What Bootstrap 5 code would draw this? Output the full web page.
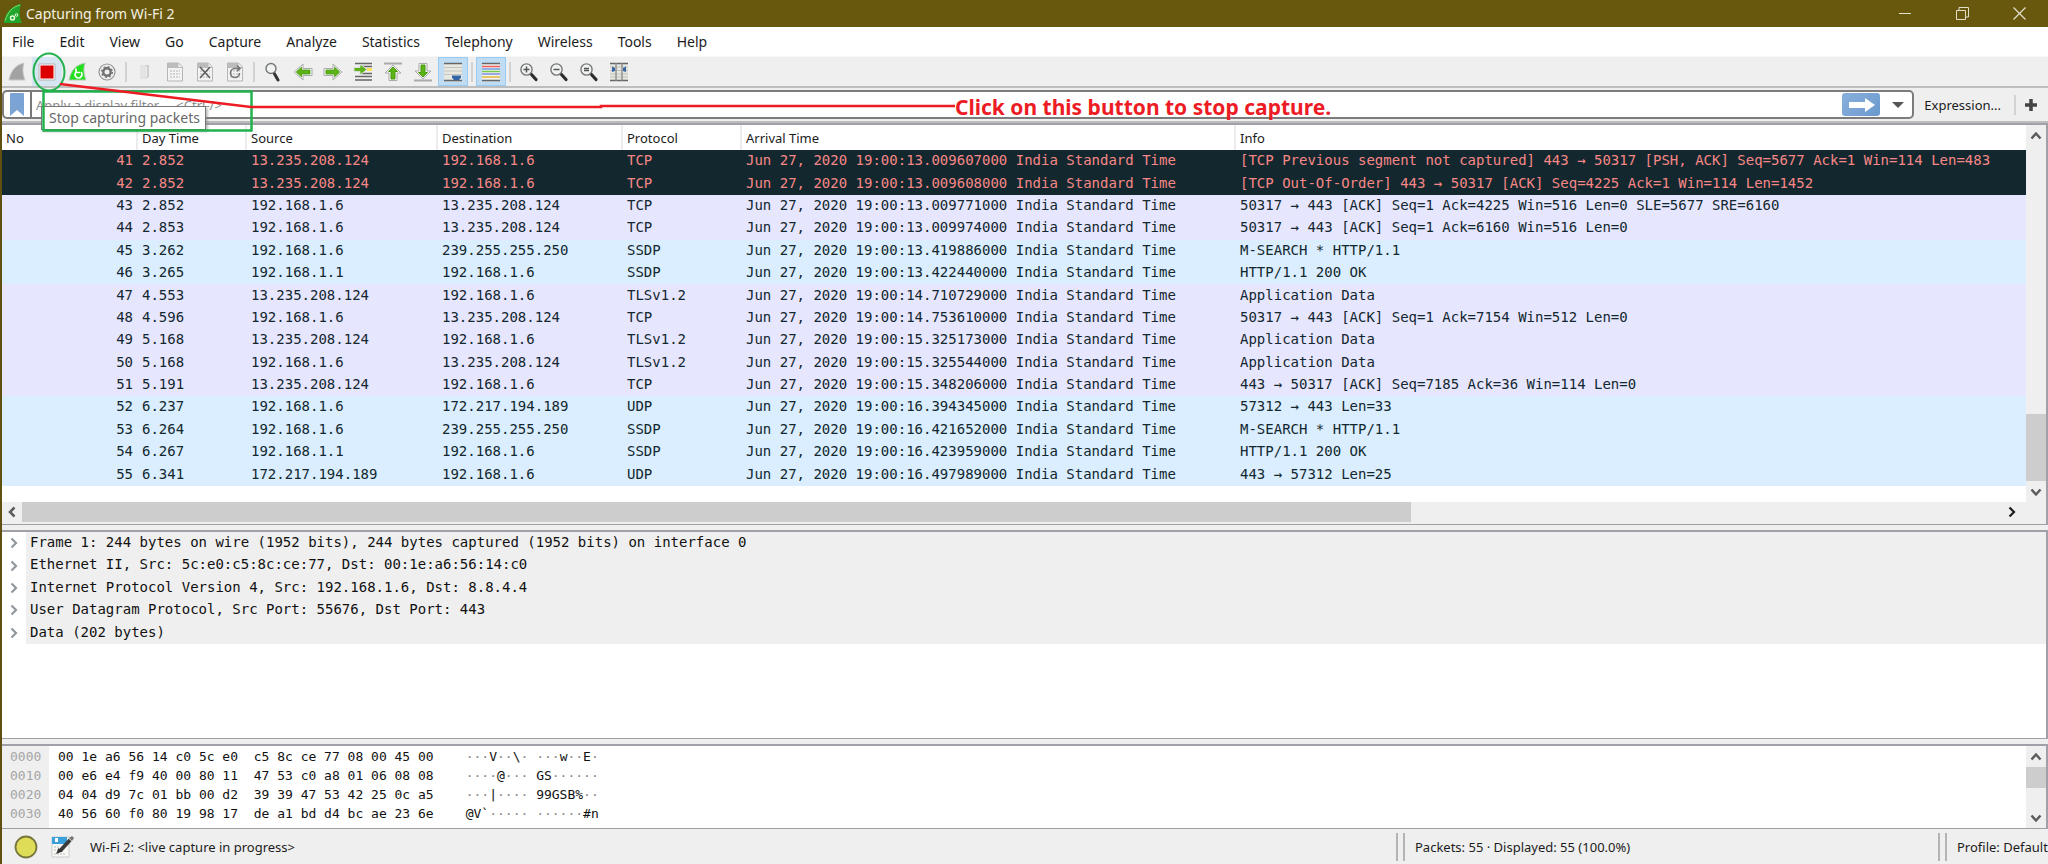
<!DOCTYPE html>
<html lang="en">
<head>
<meta charset="utf-8">
<meta name="viewport" content="width=device-width, initial-scale=1">
<title>Capturing from Wi-Fi 2</title>
<link href="https://cdn.jsdelivr.net/npm/bootstrap@5.3.0/dist/css/bootstrap.min.css" rel="stylesheet">
<style>
:root { --ui: "Noto Sans", "Open Sans", sans-serif; --code: "DejaVu Sans Mono", "Liberation Mono", monospace; --face: #efefef; --edge: #a0a0a8; }
body { font-family: var(--ui); font-size: 13px; line-height: 20px; color: #1c1c1c; background: #fff; overflow-x: hidden; }
button { border: 0; background: transparent; padding: 0; color: inherit; display: flex; align-items: center; justify-content: center; }
svg { display: block; flex: none; }
.app { border-left: 2px solid #5f5010; }
.titlebar { background: #68580d; color: #f4f1e4; height: 27px; font-size: 14px; margin-left: -2px; }
.winbtn { width: 57px; height: 27px; }
.menubar { height: 29px; font-size: 14px; gap: 25px; padding-left: 10px; }
.menubar a { color: #1c1c1c; text-decoration: none; }
.tools { background: var(--face); height: 32px; border-top: 1px solid #f7f7f7; border-bottom: 2px solid #bdbdbd; }
.tool { width: 30px; height: 29px; }
.tool.hot { background: #d5e5f2; }
.tool.on { background: #bfdcf3; border: 1px solid #99ccf5; }
.split { width: 8px; height: 20px; }
.split::before { content: ""; display: block; width: 2px; height: 20px; margin-left: 3px; background: #d2d2d2; }
.filterbar { background: var(--face); height: 35px; border-bottom: 2px solid #bdbdbd; }
.filterbox { height: 29px; background: #fff; border: 2px solid #7c7c7c; border-radius: 5px; }
.filterbox input { border: 0; outline: 0; background: transparent; font-size: 13px; color: #333; min-width: 0; }
.filterbox input::placeholder { color: #8c8c8c; opacity: 1; }
.markbtn { width: 28px; height: 25px; border-right: 2px solid #777; }
.gobtn { width: 38px; height: 23px; border-radius: 3px; background: linear-gradient(135deg, #8ab0dc, #6a99ce); }
.expr { padding: 0 10px; }
.plus { padding: 0 10px 0 5px; }
.panel { border-top: 2px solid var(--edge); border-right: 2px solid var(--edge); background: #fff; }
.packets { width: 100%; table-layout: fixed; height: 361px; border-collapse: collapse; font-family: var(--code); font-size: 14px; line-height: 20px; color: #12272e; }
.packets th { font: 13px/20px var(--ui); height: 25px; color: #1c1c1c; border-right: 2px solid #ececec; padding: 0 0 0 4px; }
.packets th:last-child { border-right: 0; }
.packets td { height: 22px; padding: 0 0 2px 5px; white-space: pre; overflow: hidden; }
.packets td:first-child { text-align: right; padding: 0 4px 2px 0; }
.bad { background: #12272e; color: #f78787; }
.tcp { background: #e7e6ff; }
.udp { background: #daeeff; }
.vbar { width: 20px; background: var(--face); }
.vbar button { width: 20px; height: 21px; }
.thumb { background: #cdcdcd; }
.hbar { height: 22px; padding-bottom: 2px; background: var(--face); }
.hbar button { width: 20px; height: 20px; }
.gapbar { height: 6px; background: var(--face); border-top: 1px solid var(--edge); }
.details { height: 208px; font-family: var(--code); font-size: 14px; line-height: 20px; color: #111; }
.tree { display: grid; grid-template-rows: repeat(5, 1fr); height: 112px; }
.tree div { display: flex; align-items: center; }
.tree button { width: 24px; height: 20px; }
.tree span { background: var(--face); align-self: stretch; flex: 1; padding-left: 4px; }
.bytes { height: 84px; font-family: var(--code); font-size: 13px; line-height: 19px; color: #111; }
.bytes pre { margin: 0; overflow: visible; font: inherit; }
.bytes i { font-style: normal; color: #888; }
.offs { background: var(--face); color: #a5a5a5; padding: 1px 7px 0 8px; width: 47px; }
.bytes .offs { padding-top: 1px; }
.hex { padding: 1px 0 0 9px; }
.asc { padding: 1px 0 0 32px; }
.status { background: var(--face); border-top: 1px solid var(--edge); height: 36px; }
.state { margin-left: 16px; }
.grip { width: 9px; height: 28px; border: solid #b4b4b4; border-width: 0 2px; }
.cell-pack { width: 533px; padding-left: 10px; }
.cell-prof { width: 101px; padding-left: 10px; }
.tip { position: absolute; left: 39px; top: 106px; width: 165px; height: 24px; border: 1px solid #777; background: #fff; color: #686868; font-size: 14px; line-height: 22px; padding-left: 7px; white-space: nowrap; box-shadow: 2px 2px 2px #8888; }
.marks { position: absolute; left: 0; top: 0; pointer-events: none; }
.callout { position: absolute; left: 955px; top: 93px; color: #ed1c24; font-size: 21px; line-height: 28px; font-weight: 700; white-space: nowrap; }
</style>
</head>
<body>
<svg width="0" height="0" class="position-absolute" aria-hidden="true">
<defs>
<symbol id="up" viewBox="0 0 12 12"><path d="M1.500 8.500 6 3.500l4.500 5" fill="none" stroke="#5c5c5c" stroke-width="2.500"/></symbol>
<symbol id="down" viewBox="0 0 12 12"><path d="M1.500 3.500 6 8.500l4.500-5" fill="none" stroke="#5c5c5c" stroke-width="2.500"/></symbol>
<symbol id="left" viewBox="0 0 12 12"><path d="M8.500 1.500 4 6l4.500 4.500" fill="none" stroke="#5c5c5c" stroke-width="2.500"/></symbol>
<symbol id="right" viewBox="0 0 12 12"><path d="M3.500 1.500 8 6l-4.500 4.500" fill="none" stroke="currentColor" stroke-width="2.200"/></symbol>
<symbol id="sheet" viewBox="0 0 18 20"><path d="M1.500 1h11l4 4v14h-15z" fill="#f3f3f3" stroke="#b5b5b5"/><path d="M1.500 1h11v4h4v1h-15z" fill="#bcbcbc"/><path d="M4 9h10M4 12h10M4 15h10" stroke="#c9c9c9" stroke-width="1.500" stroke-dasharray="2 1"/></symbol>
<symbol id="arrow" viewBox="0 0 20 18"><path d="M1 5.500h9V1L19 9l-9 8v-4.500H1z" fill="#f8f8f8" stroke="#aaa" stroke-width="1"/><path d="M3 7h8.500V4.200L16.800 9l-5.300 4.800V11H3z" fill="#5bb318" stroke="#479b0c" stroke-width=".8"/></symbol>
<symbol id="lens" viewBox="0 0 20 20"><path d="m12 12 5 5.500" stroke="#2c2c2c" stroke-width="3.200" stroke-linecap="round"/><circle cx="7.500" cy="7.500" r="5.600" fill="#f1f3f3" stroke="#777" stroke-width="1.400"/></symbol>
</defs>
</svg>
<div class="app d-flex flex-column min-vh-100 position-relative">
  <header class="titlebar d-flex align-items-center">
    <svg class="ms-1" width="18" height="20" viewBox="0 0 18 20" aria-hidden="true"><path d="M0 19C1 9 7 2 17 0c-2 6-2 13 1 19z" fill="#22a52a"/><path d="M1 17C4 8 8 3 16 1" stroke="#7be06f" fill="none"/><circle cx="8.500" cy="14" r="2" fill="none" stroke="#e4ffe0" stroke-width="1.500"/><circle cx="12.500" cy="11" r="1.300" fill="none" stroke="#e4ffe0"/></svg>
    <span class="ms-1">Capturing from Wi-Fi 2</span>
    <button class="winbtn ms-auto" aria-label="Minimize"><svg width="13" height="13"><path d="M0 6.500h12" stroke="#e3dfcb"/></svg></button>
    <button class="winbtn" aria-label="Restore"><svg width="13" height="13" fill="none" stroke="#e3dfcb"><path d="M.5 3.500h9v9h-9zM3 3V.5h9.500V10H10"/></svg></button>
    <button class="winbtn" aria-label="Close"><svg width="13" height="13"><path d="m.5.5 12 12m0-12-12 12" stroke="#e3dfcb" stroke-width="1.200"/></svg></button>
  </header>
  <nav class="menubar d-flex align-items-center">
    <a href="#">File</a><a href="#">Edit</a><a href="#">View</a><a href="#">Go</a><a href="#">Capture</a><a href="#">Analyze</a><a href="#">Statistics</a><a href="#">Telephony</a><a href="#">Wireless</a><a href="#">Tools</a><a href="#">Help</a>
  </nav>
  <div class="tools d-flex align-items-center" role="toolbar" aria-label="Main toolbar">
    <button class="tool" aria-label="Start capture"><svg width="18" height="20" viewBox="0 0 18 20"><path d="M1 18C3 8 8 3 16 1c-2 6-1 12 1 17z" fill="#a2a2a2" stroke="#c8c8c8"/></svg></button>
    <button class="tool hot" aria-label="Stop capture"><svg width="18" height="18"><path d="M1 1h16v16H1z" fill="#fff" stroke="#b4b4b4"/><path d="M2.500 2.500h13v13h-13z" fill="#dc0000"/></svg></button>
    <button class="tool" aria-label="Restart capture"><svg width="19" height="20" viewBox="0 0 19 20"><path d="M1 18C3 8 8 3 17 1c-2 6-1 12 1 17z" fill="#1fe01a" stroke="#b6c9b6"/><path d="M8 10a3.500 3.500 0 1 0 5 0M8 6.500v4h4" fill="none" stroke="#fff" stroke-width="1.700"/></svg></button>
    <button class="tool" aria-label="Capture options"><svg width="18" height="18" viewBox="0 0 18 18" fill="none"><circle cx="9" cy="9" r="8" stroke="#959595" stroke-width="1.200"/><circle cx="9" cy="9" r="3.700" stroke="#707070" stroke-width="2.400"/><circle cx="9" cy="9" r="5.300" stroke="#707070" stroke-width="1.400" stroke-dasharray="2 2.160"/></svg></button>
    <span class="split"></span>
    <button class="tool" aria-label="Open"><svg width="12" height="18" viewBox="0 0 12 18"><path d="M1 2h6v14H1z" fill="#e3e3e3"/><path d="M6 2h4v12l-4 2 2-3V4z" fill="#cecece"/></svg></button>
    <button class="tool" aria-label="Save"><svg width="18" height="20"><use href="#sheet"/></svg></button>
    <button class="tool" aria-label="Close file"><svg width="18" height="20"><use href="#sheet"/><path d="m4 5 10 11m0-11L4 16" stroke="#606060" stroke-width="1.600"/></svg></button>
    <button class="tool" aria-label="Reload"><svg width="18" height="20"><use href="#sheet"/><path d="M9 6.500a4.500 4.500 0 1 0 4.500 4.500M9 6.500h4.500M11 3.500l3 3-3 2.500" fill="none" stroke="#777" stroke-width="1.700"/></svg></button>
    <span class="split"></span>
    <button class="tool" aria-label="Find"><svg width="18" height="20" viewBox="0 0 18 20"><path d="m10 11 4 7" stroke="#333" stroke-width="3" stroke-linecap="round"/><circle cx="7" cy="6.500" r="5" fill="#f1f3f3" stroke="#777" stroke-width="1.400"/></svg></button>
    <button class="tool" aria-label="Previous packet"><svg width="20" height="18" viewBox="0 0 20 18"><use href="#arrow" width="20" height="18" transform="translate(20 0) scale(-1 1)"/></svg></button>
    <button class="tool" aria-label="Next packet"><svg width="20" height="18"><use href="#arrow"/></svg></button>
    <button class="tool" aria-label="Go to packet"><svg width="20" height="20" viewBox="0 0 20 20"><path d="M2 1.500h17M9 4.500h10M9 11.500h10M2 14.500h17M2 18h17" stroke="#666" stroke-width="1.500"/><path d="M14 6h5v3h-5z" fill="#ffe25a"/><path d="M1 5.500h6V2l7 5.500L7 13V9.500H1z" fill="#5bb318" stroke="#ddd"/></svg></button>
    <button class="tool" aria-label="First packet"><svg width="20" height="20" viewBox="0 0 20 20"><path d="M1 1.500h18" stroke="#aaa" stroke-width="2"/><path d="m10 3 8 8h-4v7.500H6V11H2z" fill="#f8f8f8" stroke="#aaa"/><path d="m10 5 4.500 4.500H12V17H8V9.500H5.500z" fill="#5bb318" stroke="#479b0c"/></svg></button>
    <button class="tool" aria-label="Last packet"><svg width="20" height="20" viewBox="0 0 20 20"><path d="M1 18.500h18" stroke="#aaa" stroke-width="2"/><path d="m10 17 8-8h-4V1.500H6V9H2z" fill="#f8f8f8" stroke="#aaa"/><path d="m10 15 4.500-4.500H12V3H8v7.500H5.500z" fill="#5bb318" stroke="#479b0c"/></svg></button>
    <button class="tool on" aria-label="Auto scroll"><svg width="20" height="20" viewBox="0 0 20 20"><path d="M1 1h18v18H1z" fill="#e8e8e2"/><path d="M1 1.500h18M1 18.500h18" stroke="#666" stroke-width="1.500"/><path d="M1 5.500h18M1 9h18M1 12.500h18" stroke="#c4c4bc"/><path d="M9 13.500h9v2l-2 2.500h-5l-2-2.500z" fill="#3465a4"/></svg></button>
    <span class="split"></span>
    <button class="tool on" aria-label="Colorize"><svg width="20" height="20" viewBox="0 0 20 20"><path d="M1 1h18v18H1z" fill="#f2f2ee"/><g stroke-width="1.500"><path d="M1 1.500h18M1 18.500h18" stroke="#666"/><path d="M1 4.500h18" stroke="#ef5b5b"/><path d="M1 7h18" stroke="#6f9ddd"/><path d="M1 9.500h18" stroke="#74c84c"/><path d="M1 12h18" stroke="#7b8fdf"/><path d="M1 15h18" stroke="#e1b93c"/></g></svg></button>
    <span class="split"></span>
    <button class="tool" aria-label="Zoom in"><svg width="20" height="20"><use href="#lens"/><path d="M4.500 7.500h6m-3-3v6" stroke="#555" stroke-width="1.500"/></svg></button>
    <button class="tool" aria-label="Zoom out"><svg width="20" height="20"><use href="#lens"/><path d="M4.500 7.500h6" stroke="#555" stroke-width="1.500"/></svg></button>
    <button class="tool" aria-label="Normal size"><svg width="20" height="20"><use href="#lens"/><path d="M5 6.500h5m-5 2h5" stroke="#555" stroke-width="1.500"/></svg></button>
    <button class="tool" aria-label="Resize columns"><svg width="20" height="20" viewBox="0 0 20 20"><path d="M1 1h18v18H1z" fill="#e6e6e0"/><path d="M1 1.500h18M1 18.500h18" stroke="#666" stroke-width="1.500"/><path d="M1 5h18M1 8.500h18M1 12h18M1 15h18" stroke="#c4c4bc"/><path d="M7 1v18M13 1v18" stroke="#888" stroke-width="1.300"/><path d="M3 4.500 6 6v3l-3 1zM17 4.500 14 6v3l3 1z" fill="#3465a4"/></svg></button>
  </div>
  <div class="filterbar d-flex align-items-center">
    <div class="filterbox d-flex align-items-center flex-grow-1">
      <button class="markbtn" aria-label="Bookmarks"><svg width="14" height="23"><path d="M1 0h12q1 0 1 1v22l-7-6-7 6V1q0-1 1-1z" fill="#7ba3d4"/></svg></button>
      <input class="flex-grow-1 ps-1" type="text" aria-label="Display filter" placeholder="Apply a display filter ... &lt;Ctrl-/&gt;">
      <button class="gobtn" aria-label="Apply filter"><svg width="27" height="14"><path d="M1 4h16V0l10 7-10 7v-4H1z" fill="#fff"/></svg></button>
      <button class="px-2 ms-1" aria-label="Filter history"><svg width="12" height="6"><path d="M0 0h12L6 6z" fill="#555"/></svg></button>
    </div>
    <button class="expr">Expression...</button>
    <span class="split"></span>
    <button class="plus" aria-label="Add filter button"><svg width="14" height="14"><path d="M7 1v12M1 7h12" stroke="#444" stroke-width="3.500"/></svg></button>
  </div>
  <main class="d-flex flex-column flex-grow-1">
    <section class="panel">
      <div class="d-flex">
        <div class="flex-grow-1">
          <table class="packets">
            <colgroup><col style="width:135px"><col style="width:109px"><col style="width:191px"><col style="width:185px"><col style="width:119px"><col style="width:494px"><col></colgroup>
            <thead><tr><th>No</th><th>Day Time</th><th>Source</th><th>Destination</th><th>Protocol</th><th>Arrival Time</th><th>Info</th></tr></thead>
            <tbody>
            <tr class="bad"><td>41</td><td>2.852</td><td>13.235.208.124</td><td>192.168.1.6</td><td>TCP</td><td>Jun 27, 2020 19:00:13.009607000 India Standard Time</td><td>[TCP Previous segment not captured] 443 → 50317 [PSH, ACK] Seq=5677 Ack=1 Win=114 Len=483</td></tr>
            <tr class="bad"><td>42</td><td>2.852</td><td>13.235.208.124</td><td>192.168.1.6</td><td>TCP</td><td>Jun 27, 2020 19:00:13.009608000 India Standard Time</td><td>[TCP Out-Of-Order] 443 → 50317 [ACK] Seq=4225 Ack=1 Win=114 Len=1452</td></tr>
            <tr class="tcp"><td>43</td><td>2.852</td><td>192.168.1.6</td><td>13.235.208.124</td><td>TCP</td><td>Jun 27, 2020 19:00:13.009771000 India Standard Time</td><td>50317 → 443 [ACK] Seq=1 Ack=4225 Win=516 Len=0 SLE=5677 SRE=6160</td></tr>
            <tr class="tcp"><td>44</td><td>2.853</td><td>192.168.1.6</td><td>13.235.208.124</td><td>TCP</td><td>Jun 27, 2020 19:00:13.009974000 India Standard Time</td><td>50317 → 443 [ACK] Seq=1 Ack=6160 Win=516 Len=0</td></tr>
            <tr class="udp"><td>45</td><td>3.262</td><td>192.168.1.6</td><td>239.255.255.250</td><td>SSDP</td><td>Jun 27, 2020 19:00:13.419886000 India Standard Time</td><td>M-SEARCH * HTTP/1.1</td></tr>
            <tr class="udp"><td>46</td><td>3.265</td><td>192.168.1.1</td><td>192.168.1.6</td><td>SSDP</td><td>Jun 27, 2020 19:00:13.422440000 India Standard Time</td><td>HTTP/1.1 200 OK</td></tr>
            <tr class="tcp"><td>47</td><td>4.553</td><td>13.235.208.124</td><td>192.168.1.6</td><td>TLSv1.2</td><td>Jun 27, 2020 19:00:14.710729000 India Standard Time</td><td>Application Data</td></tr>
            <tr class="tcp"><td>48</td><td>4.596</td><td>192.168.1.6</td><td>13.235.208.124</td><td>TCP</td><td>Jun 27, 2020 19:00:14.753610000 India Standard Time</td><td>50317 → 443 [ACK] Seq=1 Ack=7154 Win=512 Len=0</td></tr>
            <tr class="tcp"><td>49</td><td>5.168</td><td>13.235.208.124</td><td>192.168.1.6</td><td>TLSv1.2</td><td>Jun 27, 2020 19:00:15.325173000 India Standard Time</td><td>Application Data</td></tr>
            <tr class="tcp"><td>50</td><td>5.168</td><td>192.168.1.6</td><td>13.235.208.124</td><td>TLSv1.2</td><td>Jun 27, 2020 19:00:15.325544000 India Standard Time</td><td>Application Data</td></tr>
            <tr class="tcp"><td>51</td><td>5.191</td><td>13.235.208.124</td><td>192.168.1.6</td><td>TCP</td><td>Jun 27, 2020 19:00:15.348206000 India Standard Time</td><td>443 → 50317 [ACK] Seq=7185 Ack=36 Win=114 Len=0</td></tr>
            <tr class="udp"><td>52</td><td>6.237</td><td>192.168.1.6</td><td>172.217.194.189</td><td>UDP</td><td>Jun 27, 2020 19:00:16.394345000 India Standard Time</td><td>57312 → 443 Len=33</td></tr>
            <tr class="udp"><td>53</td><td>6.264</td><td>192.168.1.6</td><td>239.255.255.250</td><td>SSDP</td><td>Jun 27, 2020 19:00:16.421652000 India Standard Time</td><td>M-SEARCH * HTTP/1.1</td></tr>
            <tr class="udp"><td>54</td><td>6.267</td><td>192.168.1.1</td><td>192.168.1.6</td><td>SSDP</td><td>Jun 27, 2020 19:00:16.423959000 India Standard Time</td><td>HTTP/1.1 200 OK</td></tr>
            <tr class="udp"><td>55</td><td>6.341</td><td>172.217.194.189</td><td>192.168.1.6</td><td>UDP</td><td>Jun 27, 2020 19:00:16.497989000 India Standard Time</td><td>443 → 57312 Len=25</td></tr>
            </tbody>
          </table>
          <div class="pb-3"></div>
        </div>
        <div class="vbar d-flex flex-column">
          <button aria-label="Scroll up"><svg width="12" height="12"><use href="#up"/></svg></button>
          <div class="thumb mt-auto" style="height:67px"></div>
          <button aria-label="Scroll down"><svg width="12" height="12"><use href="#down"/></svg></button>
        </div>
      </div>
      <div class="hbar d-flex">
        <button aria-label="Scroll left"><svg width="12" height="12"><use href="#left"/></svg></button>
        <div class="flex-grow-1 me-4"><div class="thumb h-100" style="width:71%"></div></div>
        <button class="me-4" aria-label="Scroll right"><svg width="12" height="12"><use href="#right"/></svg></button>
      </div>
    </section>
    <div class="gapbar"></div>
    <section class="panel details">
      <div class="tree">
        <div><button aria-label="Expand"><svg class="text-secondary opacity-75" width="12" height="12"><use href="#right"/></svg></button><span>Frame 1: 244 bytes on wire (1952 bits), 244 bytes captured (1952 bits) on interface 0</span></div>
        <div><button aria-label="Expand"><svg class="text-secondary opacity-75" width="12" height="12"><use href="#right"/></svg></button><span>Ethernet II, Src: 5c:e0:c5:8c:ce:77, Dst: 00:1e:a6:56:14:c0</span></div>
        <div><button aria-label="Expand"><svg class="text-secondary opacity-75" width="12" height="12"><use href="#right"/></svg></button><span>Internet Protocol Version 4, Src: 192.168.1.6, Dst: 8.8.4.4</span></div>
        <div><button aria-label="Expand"><svg class="text-secondary opacity-75" width="12" height="12"><use href="#right"/></svg></button><span>User Datagram Protocol, Src Port: 55676, Dst Port: 443</span></div>
        <div><button aria-label="Expand"><svg class="text-secondary opacity-75" width="12" height="12"><use href="#right"/></svg></button><span>Data (202 bytes)</span></div>
      </div>
    </section>
    <div class="gapbar"></div>
    <section class="panel bytes d-flex">
      <pre class="offs">0000
0010
0020
0030</pre>
      <pre class="hex">00 1e a6 56 14 c0 5c e0  c5 8c ce 77 08 00 45 00
00 e6 e4 f9 40 00 80 11  47 53 c0 a8 01 06 08 08
04 04 d9 7c 01 bb 00 d2  39 39 47 53 42 25 0c a5
40 56 60 f0 80 19 98 17  de a1 bd d4 bc ae 23 6e</pre>
      <pre class="asc"><i>···</i>V<i>··</i>\<i>·</i> <i>···</i>w<i>··</i>E<i>·</i>
<i>····</i>@<i>···</i> GS<i>······</i>
<i>···</i>|<i>····</i> 99GSB%<i>··</i>
@V`<i>·····</i> <i>······</i>#n</pre>
      <div class="vbar d-flex flex-column ms-auto">
        <button aria-label="Scroll up"><svg width="12" height="12"><use href="#up"/></svg></button>
        <div class="thumb" style="height:21px"></div>
        <button class="mt-auto" aria-label="Scroll down"><svg width="12" height="12"><use href="#down"/></svg></button>
      </div>
    </section>
  </main>
  <footer class="status d-flex align-items-center">
    <button class="ms-2 ps-1" aria-label="Expert information"><svg width="24" height="24"><circle cx="12" cy="12" r="10.500" fill="#dfdd58" stroke="#77763f" stroke-width="1.800"/></svg></button>
    <button class="ms-2 ps-1" aria-label="Capture comment"><svg width="24" height="24" viewBox="0 0 24 24"><path d="M2 2h17v20H2z" fill="#f8f8f4" stroke="#ccc"/><path d="M2 2h15v7H2z" fill="#3aa0dc"/><path d="M5 7V3h3v4z" fill="#fff"/><path d="M4 12h6M4 15h4M4 19h11" stroke="#bbb" stroke-dasharray="2 1"/><path d="M20 5 10 16" stroke="#3b3b3b" stroke-width="4"/><path d="m8.500 13 4 3.500L6 19z" fill="#333"/><path d="m19 3 3-2 2 2-2 3z" fill="#777"/></svg></button>
    <span class="state">Wi-Fi 2: &lt;live capture in progress&gt;</span>
    <span class="grip ms-auto"></span>
    <span class="cell-pack">Packets: 55 · Displayed: 55 (100.0%)</span>
    <span class="grip"></span>
    <span class="cell-prof text-nowrap">Profile: Default</span>
  </footer>
  <div class="tip" role="tooltip">Stop capturing packets</div>
</div>
<svg class="marks" width="960" height="135" fill="none" aria-hidden="true"><ellipse cx="49" cy="72" rx="15.500" ry="18.500" stroke="#22b14c" stroke-width="2"/><path d="M43.500 91.500h208v39h-208z" stroke="#22b14c" stroke-width="2.500"/><path d="m60 84 191 23h350v-1h354" stroke="#ed1c24" stroke-width="2.500"/></svg>
<div class="callout">Click on this button to stop capture.</div>
<script src="https://cdn.jsdelivr.net/npm/bootstrap@5.3.0/dist/js/bootstrap.bundle.min.js"></script>
</body>
</html>
